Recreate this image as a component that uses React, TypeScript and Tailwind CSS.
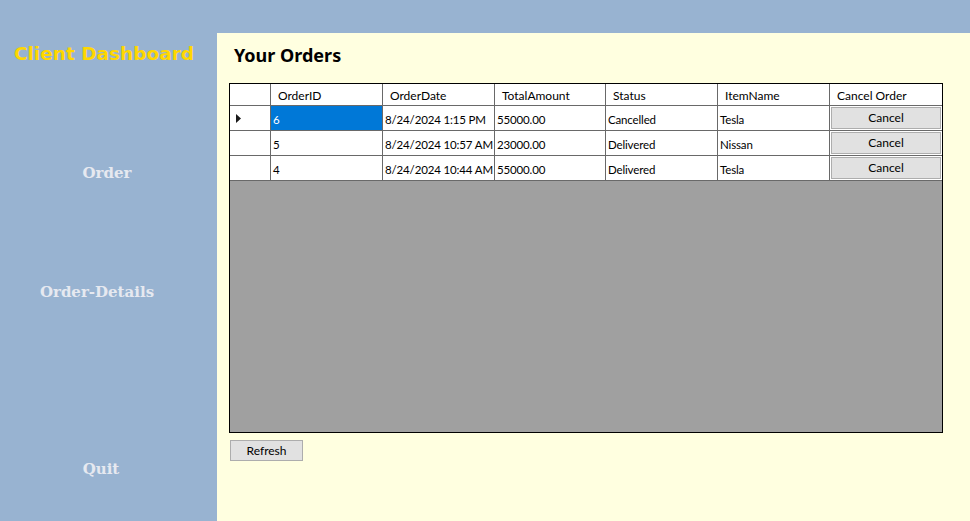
const cols = [
  { key: "id", label: "OrderID", w: "w-[112px]" },
  { key: "date", label: "OrderDate", w: "w-[112px]" },
  { key: "amount", label: "TotalAmount", w: "w-[111px]" },
  { key: "status", label: "Status", w: "w-[112px]" },
  { key: "item", label: "ItemName", w: "w-[112px]" },
];

const orders = [
  { id: "6", date: "8/24/2024 1:15 PM", amount: "55000.00", status: "Cancelled", item: "Tesla" },
  { id: "5", date: "8/24/2024 10:57 AM", amount: "23000.00", status: "Delivered", item: "Nissan" },
  { id: "4", date: "8/24/2024 10:44 AM", amount: "55000.00", status: "Delivered", item: "Tesla" },
];

function NavLink({ label, className }: { label: string; className: string }) {
  return (
    <div
      className={`text-[15px] font-bold text-[#e6e9f0] ${className}`}
      style={{ fontFamily: '"DejaVu Serif", "Liberation Serif", serif' }}
    >
      {label}
    </div>
  );
}

export default function App() {
  return (
    <div
      className="flex w-[970px] h-[521px] bg-[#98b3d1] overflow-hidden"
      style={{ fontFamily: '"Noto Sans", "Open Sans", sans-serif' }}
    >
      <aside className="w-[217px] shrink-0 flex flex-col items-center">
        <h1
          className="mt-[40px] ml-[-9px] text-[18.5px] font-bold text-[#ffd700] leading-[28px] whitespace-nowrap"
          style={{ fontFamily: '"DejaVu Sans", Verdana, sans-serif' }}
        >
          Client Dashboard
        </h1>
        <NavLink label="Order" className="mt-[94px] ml-[-3px]" />
        <NavLink label="Order-Details" className="mt-[96px] ml-[-23px]" />
        <NavLink label="Quit" className="mt-[155px] ml-[-15px]" />
      </aside>

      <main className="flex-1 mt-[33px] bg-[#ffffe0] pl-[12px]">
        <h2 className="mt-[10px] ml-[5px] text-[18px] font-bold text-black leading-[24px]">
          Your Orders
        </h2>

        <div
          className="mt-[16px] w-[714px] h-[350px] border border-black bg-[#a0a0a0] text-[12px] text-black"
          style={{ fontFamily: 'Lato, "Liberation Sans", sans-serif' }}
        >
          <div className="flex h-[22px] bg-white border-b border-[#696969]">
            <div className="w-[41px] border-r border-[#696969]" />
            {cols.map((c) => (
              <div
                key={c.key}
                className={`${c.w} border-r border-[#696969] pl-[7px] leading-[24px] whitespace-nowrap overflow-hidden`}
              >
                {c.label}
              </div>
            ))}
            <div className="w-[112px] pl-[7px] leading-[24px] whitespace-nowrap">Cancel Order</div>
          </div>
          {orders.map((o, i) => (
            <div key={o.id} className="flex h-[25px] bg-white border-b border-[#696969]">
              <div className="w-[41px] border-r border-[#696969] flex items-center pl-[6px]">
                {i === 0 && (
                  <svg width="5" height="9" viewBox="0 0 5 9">
                    <path d="M0 0 L5 4.5 L0 9 Z" fill="#1a1a1a" />
                  </svg>
                )}
              </div>
              {cols.map((c) => (
                <div
                  key={c.key}
                  className={`${c.w} border-r border-[#696969] pl-[2px] text-[11.5px] tracking-[-0.15px] leading-[27px] whitespace-nowrap overflow-hidden ${
                    i === 0 && c.key === "id" ? "bg-[#0078d7] text-white" : ""
                  }`}
                >
                  {o[c.key as keyof typeof o]}
                </div>
              ))}
              <div className="w-[112px] p-[1px]">
                <button className="w-full h-[22px] bg-[#e1e1e1] border border-[#adadad] leading-[18px] text-[12px]">
                  Cancel
                </button>
              </div>
            </div>
          ))}
        </div>

        <button
          className="mt-[7px] ml-[1px] w-[73px] h-[21px] bg-[#e1e1e1] border border-[#adadad] text-[12px] leading-[18px]"
          style={{ fontFamily: 'Lato, "Liberation Sans", sans-serif' }}
        >
          Refresh
        </button>
      </main>
    </div>
  );
}
